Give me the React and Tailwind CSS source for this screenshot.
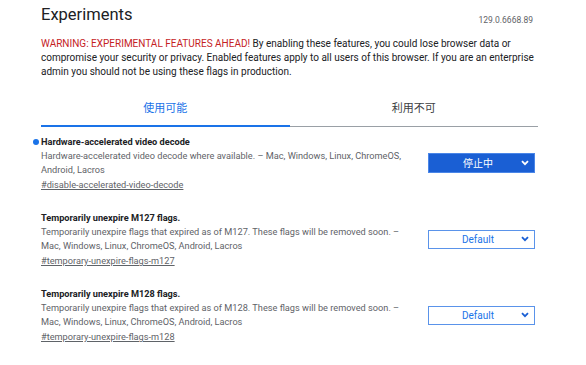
import React from "react";

function Chevron({ color }) {
  return (
    <svg width="8" height="6" viewBox="0 0 8 6" className="shrink-0">
      <path d="M1 1.2 L4 4.2 L7 1.2" fill="none" stroke={color} strokeWidth="1.8" />
    </svg>
  );
}

function Select({ label, active }) {
  return (
    <div
      className={
        active
          ? "w-[107px] h-[20px] flex items-center bg-[#1a5fd4] border border-[#4a86e8] text-white"
          : "w-[107px] h-[19px] flex items-center bg-white border border-[#5a93ea] text-[#1a73e8]"
      }
    >
      <span className="flex-1 text-center text-[10px] pl-[6px]">{label}</span>
      <span className="pr-[5px] flex items-center">
        <Chevron color={active ? "#ffffff" : "#1a5fd4"} />
      </span>
    </div>
  );
}

function Item({ title, lines, link, select, active, dot }) {
  return (
    <div className="relative flex items-center">
      {dot && (
        <span className="absolute left-[-8px] top-[5px] w-[6px] h-[6px] rounded-full bg-[#1a73e8]" />
      )}
      <div className="flex-1 min-w-0">
        <div className="text-[9.2px] leading-[15px] font-bold text-[#202124]">{title}</div>
        <div className="text-[9.2px] leading-[14px] text-[#5f6368]">
          {lines.map((l, i) => (
            <div key={i} className="whitespace-nowrap">{l}</div>
          ))}
        </div>
        <div className="text-[9.2px] leading-[15px] text-[#5f6368] underline">{link}</div>
      </div>
      <div className="shrink-0">
        <Select label={select} active={active} />
      </div>
    </div>
  );
}

export default function App() {
  return (
    <div
      className="w-[586px] h-[365px] bg-white overflow-hidden"
      style={{ fontFamily: "Roboto, 'Noto Sans CJK JP', sans-serif" }}
    >
      <div className="ml-[41px] w-[497px]">
        <div className="flex items-end justify-between pt-[4px]">
          <h1 className="text-[16.5px] leading-[22px] text-[#202124]">Experiments</h1>
          <span className="text-[8.5px] text-[#5f6368] mb-[-1px] mr-[5px]">129.0.6668.89</span>
        </div>
        <p className="mt-[11px] text-[10px] leading-[14px] text-[#202124] whitespace-nowrap">
          <span className="text-[#c5221f]">WARNING: EXPERIMENTAL FEATURES AHEAD!</span> By enabling these features, you could lose browser data or
          <br />
          compromise your security or privacy. Enabled features apply to all users of this browser. If you are an enterprise
          <br />
          admin you should not be using these flags in production.
        </p>
        <div className="mt-[22px] flex">
          <div className="flex-1 flex flex-col items-center">
            <span className="text-[11px] leading-[16px] text-[#1a73e8]">使用可能</span>
            <div className="mt-[8px] w-full h-[2px] bg-[#1a73e8]" />
          </div>
          <div className="flex-1 flex flex-col items-center">
            <span className="text-[11px] leading-[16px] text-[#3c4043]">利用不可</span>
            <div className="mt-[9px] w-full h-[1px] bg-[#9aa0a6]" />
          </div>
        </div>
        <div className="mt-[7px] flex flex-col gap-[18px] pr-[3px]">
          <Item
            dot
            title="Hardware-accelerated video decode"
            lines={[
              "Hardware-accelerated video decode where available. – Mac, Windows, Linux, ChromeOS,",
              "Android, Lacros",
            ]}
            link="#disable-accelerated-video-decode"
            select="停止中"
            active
          />
          <Item
            title="Temporarily unexpire M127 flags."
            lines={[
              "Temporarily unexpire flags that expired as of M127. These flags will be removed soon. –",
              "Mac, Windows, Linux, ChromeOS, Android, Lacros",
            ]}
            link="#temporary-unexpire-flags-m127"
            select="Default"
          />
          <Item
            title="Temporarily unexpire M128 flags."
            lines={[
              "Temporarily unexpire flags that expired as of M128. These flags will be removed soon. –",
              "Mac, Windows, Linux, ChromeOS, Android, Lacros",
            ]}
            link="#temporary-unexpire-flags-m128"
            select="Default"
          />
        </div>
      </div>
    </div>
  );
}
